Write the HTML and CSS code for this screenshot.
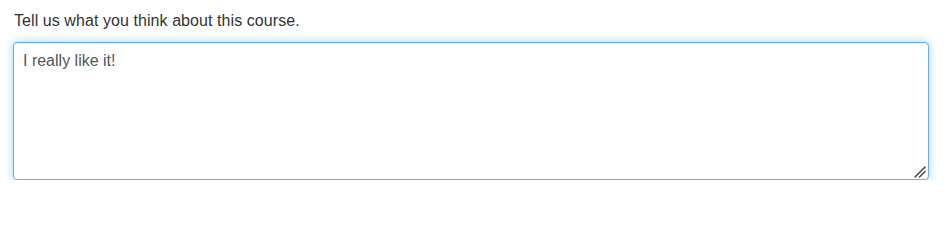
FILE: index.html
```html
<!DOCTYPE html>
<html>
<head>
<meta charset="utf-8">
<link rel="stylesheet" href="styles.css">
</head>
<body>
<div class="form-group">
  <label class="field-label" for="feedback">Tell us what you think about this course.</label>
  <div class="field-wrap">
    <textarea id="feedback" class="form-control">I really like it!</textarea>
    <svg class="grip" width="12" height="12" viewBox="0 0 12 12" aria-hidden="true">
      <path d="M1 11 L11 1 M5.5 11 L11 5.5" stroke="#4d4d4d" stroke-width="1.6" stroke-linecap="round" fill="none"/>
    </svg>
  </div>
</div>
</body>
</html>
```
FILE: styles.css
```css
html, body {
  margin: 0;
  padding: 0;
  background: #fff;
}
body {
  font-family: "Liberation Sans", Arial, sans-serif;
  font-size: 16px;
  color: #333;
}
.form-group {
  padding: 10px 15px 0 13px;
}
.field-label {
  display: block;
  padding-left: 1px;
  line-height: 22px;
  margin-bottom: 10px;
  letter-spacing: 0.07px;
  color: #333;
}
.field-wrap {
  position: relative;
}
.form-control {
  display: block;
  box-sizing: border-box;
  width: 100%;
  height: 138px;
  margin: 0;
  padding: 7px 9px;
  font-family: "Liberation Sans", Arial, sans-serif;
  font-size: 16px;
  line-height: 22px;
  color: #555;
  background: #fff;
  border: 1px solid #66afe9;
  border-radius: 4px;
  outline: 0;
  box-shadow: inset 0 1px 1px rgba(0,0,0,.075), 0 0 8px rgba(102,175,233,.6);
  resize: none;
}
.grip {
  position: absolute;
  right: 3px;
  bottom: 2px;
  pointer-events: none;
}
```
